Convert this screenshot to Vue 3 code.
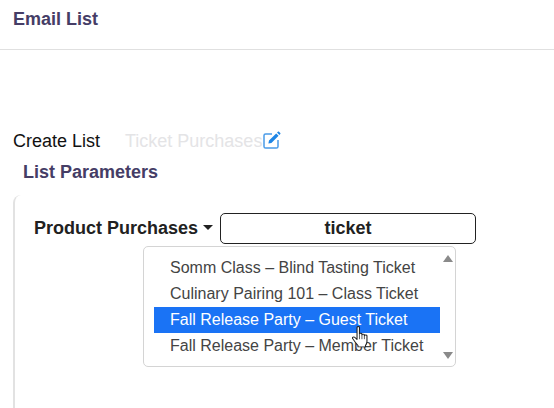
<script setup>
const options = [
	{ id: 1, name: 'Somm Class – Blind Tasting Ticket' },
	{ id: 2, name: 'Culinary Pairing 101 – Class Ticket' },
	{ id: 3, name: 'Fall Release Party – Guest Ticket' },
	{ id: 4, name: 'Fall Release Party – Member Ticket' }
]
const selected = 3
</script>
<template>
	<div class="page">
		<header class="top">Email List</header>
		<div class="name-row">
			<span class="create">Create List</span>
			<span class="list-name">Ticket Purchases</span>
			<svg class="edit" width="18" height="18" viewBox="0 0 18 18">
				<path d="M9 3H2.600C1.700 3 1 3.700 1 4.600v10.800c0 .9.7 1.600 1.600 1.600h10.800c.9 0 1.600-.7 1.600-1.600V9" fill="none" stroke="#4a9be8" stroke-width="1.500"/>
				<path d="M6 9.600 13.200 2.400l2.400 2.400L8.400 12 5.400 12.600zM14 1.600l.9-.9c.3-.3.8-.3 1.100 0l1.300 1.300c.3.3.3.8 0 1.100l-.9.9z" fill="#1f86e5"/>
			</svg>
		</div>
		<h2 class="params-title">List Parameters</h2>
		<section class="params">
			<div class="filter-row">
				<span class="filter-label">Product Purchases<i class="caret"></i></span>
				<div class="search">ticket</div>
			</div>
			<div class="dropdown">
				<ul class="options">
					<li v-for="item in options" :key="item.id" :class="{ active: item.id === selected }">{{ item.name }}</li>
				</ul>
				<div class="scroll">
					<i class="arrow up"></i>
					<i class="arrow down"></i>
				</div>
				<!-- mouse pointer -->
				<svg class="hand" width="17" height="22" viewBox="0.500 0.500 12.500 20" preserveAspectRatio="none">
					<path d="M4.200 1.800c0-1.100 1.800-1.100 1.800 0v6c0-.9 1.800-.9 1.800 0v.8c0-.9 1.800-.9 1.800 0v.8c0-.9 1.900-.9 1.900 0v5.200c0 1.600-.5 2.600-1.100 3.600v1.300H4.900v-1.300C3.600 16.400 2.300 14.400 1 12c-.6-1.100.8-2 1.700-1l1.500 1.800z" fill="#fff" stroke="#222" stroke-width=".8" stroke-linejoin="round"/>
					<path d="M6 8v4.500M7.800 8.600v3.900M9.600 9.400v3.100" fill="none" stroke="#222" stroke-width=".6"/>
				</svg>
			</div>
		</section>
	</div>
</template>
<style>
	html, body {
		background: #fff;
	}
</style>
<style scoped>
	.page {
		width: 554px;
		height: 408px;
		overflow: hidden;
		font-family: 'Liberation Sans', Arial, sans-serif;
		color: #000;
		background: #fff;
	}
	.top {
		box-sizing: border-box;
		height: 50px;
		padding: 9px 13px 0;
		border-bottom: 1px solid #e0e0e0;
		font-size: 18px;
		line-height: 20px;
		font-weight: bold;
		color: #453d66;
	}
	.name-row {
		display: flex;
		align-items: center;
		height: 22px;
		margin-top: 80px;
		padding-left: 13px;
		font-size: 18px;
	}
	.create {
		width: 112px;
		color: #111;
	}
	.list-name {
		color: #e4e4e6;
	}
	.edit {
		margin: -3px 0 0 1px;
	}
	.params-title {
		margin: 10px 0 0 23px;
		font-size: 18px;
		line-height: 20px;
		font-weight: bold;
		color: #453d66;
	}
	.params {
		box-sizing: border-box;
		height: 215px;
		margin: 13px 0 0 13px;
		padding: 17px 0 0 19px;
		border-left: 2px solid #e2e2e2;
		border-top-left-radius: 8px;
		position: relative;
	}
	.filter-row {
		display: flex;
		align-items: center;
		height: 32px;
	}
	.filter-label {
		display: flex;
		align-items: center;
		width: 186px;
		font-size: 18px;
		font-weight: bold;
		color: #212121;
		white-space: nowrap;
	}
	.caret {
		width: 0;
		height: 0;
		margin: -2px 0 0 5px;
		border-left: 5px solid transparent;
		border-right: 5px solid transparent;
		border-top: 5px solid #212121;
	}
	.search {
		box-sizing: border-box;
		width: 256px;
		height: 31px;
		border: 1px solid #222;
		border-radius: 5px;
		text-align: center;
		font-size: 18px;
		line-height: 29px;
		font-weight: bold;
		color: #212121;
	}
	.dropdown {
		position: absolute;
		left: 128px;
		top: 51px;
		box-sizing: border-box;
		display: flex;
		width: 313px;
		height: 121px;
		padding: 8px 0 0 10px;
		border: 1px solid #d4d4d4;
		border-radius: 5px;
		background: #fff;
	}
	.options {
		width: 286px;
		margin: 0;
		padding: 0;
		list-style: none;
	}
	.options li {
		height: 26px;
		padding-left: 16px;
		font-size: 16px;
		line-height: 26px;
		color: #444;
		white-space: nowrap;
	}
	.options li.active {
		background: #1a73f5;
		color: #fff;
	}
	.scroll {
		display: flex;
		flex-direction: column;
		justify-content: space-between;
		align-items: center;
		width: 15px;
		height: 104px;
		padding-top: 0;
	}
	.arrow {
		width: 0;
		height: 0;
		border-left: 5px solid transparent;
		border-right: 5px solid transparent;
	}
	.arrow.up {
		border-bottom: 7px solid #8a8a8a;
	}
	.arrow.down {
		border-top: 7px solid #8a8a8a;
	}
	.hand {
		position: absolute;
		left: 208px;
		top: 79px;
	}
</style>
